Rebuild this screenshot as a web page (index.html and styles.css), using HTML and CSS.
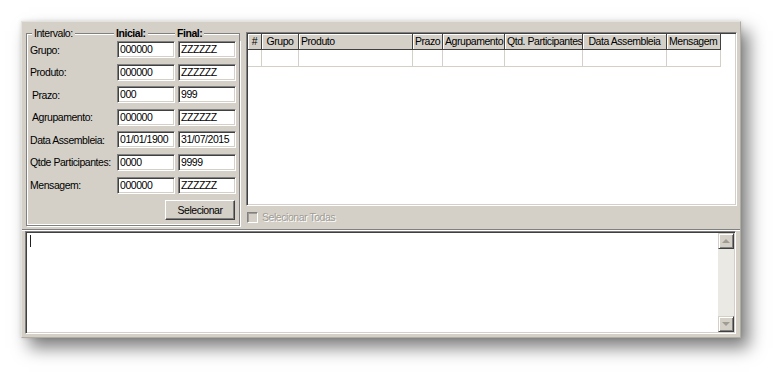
FILE: index.html
```html
<!DOCTYPE html>
<html lang="pt">
<head>
<meta charset="utf-8">
<title>Intervalo</title>
<link rel="stylesheet" href="styles.css">
</head>
<body>
<div class="window">
  <div class="top">
    <div class="groupbox">
      <div class="gb-head">
        <div class="gb-cell">
          <span class="corner-l"></span>
          <span class="gb-text">Intervalo:</span>
          <span class="gb-line"></span>
        </div>
        <div class="gb-cell">
          <span class="gb-text bold">Inicial:</span>
          <span class="gb-line"></span>
        </div>
        <div class="gb-cell">
          <span class="gb-text bold">Final:</span>
          <span class="gb-line corner-r"></span>
        </div>
      </div>
      <div class="gb-body">
        <div class="rows">
          <span class="lbl">Grupo:</span><span class="edit">000000</span><span class="edit">ZZZZZZ</span>
          <span class="lbl">Produto:</span><span class="edit">000000</span><span class="edit">ZZZZZZ</span>
          <span class="lbl indent">Prazo:</span><span class="edit">000</span><span class="edit">999</span>
          <span class="lbl indent">Agrupamento:</span><span class="edit">000000</span><span class="edit">ZZZZZZ</span>
          <span class="lbl">Data Assembleia:</span><span class="edit">01/01/1900</span><span class="edit">31/07/2015</span>
          <span class="lbl">Qtde Participantes:</span><span class="edit">0000</span><span class="edit">9999</span>
          <span class="lbl">Mensagem:</span><span class="edit">000000</span><span class="edit">ZZZZZZ</span>
        </div>
        <div class="btn-row"><span class="button">Selecionar</span></div>
      </div>
    </div>
    <div class="right">
      <div class="grid">
        <div class="grid-row head">
          <span class="hc center">#</span>
          <span class="hc center">Grupo</span>
          <span class="hc">Produto</span>
          <span class="hc">Prazo</span>
          <span class="hc">Agrupamento</span>
          <span class="hc">Qtd. Participantes</span>
          <span class="hc center">Data Assembleia</span>
          <span class="hc">Mensagem</span>
        </div>
        <div class="grid-row data">
          <span class="dc"></span><span class="dc"></span><span class="dc"></span><span class="dc"></span>
          <span class="dc"></span><span class="dc"></span><span class="dc"></span><span class="dc"></span>
        </div>
      </div>
      <div class="check-row">
        <span class="checkbox"></span>
        <span class="check-text">Selecionar Todas</span>
      </div>
    </div>
  </div>
  <div class="sep"></div>
  <div class="memo">
    <div class="memo-text"><span class="caret"></span></div>
    <div class="vscroll">
      <span class="sbtn"><span class="arrow-up"></span></span>
      <span class="track"></span>
      <span class="sbtn"><span class="arrow-down"></span></span>
    </div>
  </div>
</div>
</body>
</html>
```
FILE: styles.css
```css
html, body {
  margin: 0;
  padding: 0;
  background: #ffffff;
}

body {
  font-family: "Liberation Sans", Arial, sans-serif;
  font-size: 10.5px;
  letter-spacing: -0.45px;
  color: #000;
  padding: 21px 0 0 21px;
  height: 381px;
  box-sizing: border-box;
}

.window {
  width: 720px;
  height: 317px;
  box-sizing: border-box;
  background: #d4d0c8;
  border-left: 1px solid #e4e2dc;
  border-top: 1px solid #e4e2dc;
  border-right: 1px solid #b0aca4;
  border-bottom: 1px solid #b0aca4;
  box-shadow: 8px 10px 16px rgba(0, 0, 0, 0.5), 0 0 4px rgba(0, 0, 0, 0.12);
  display: flex;
  flex-direction: column;
}

.top {
  height: 207px;
  box-sizing: border-box;
  padding: 4px 0 0 4px;
  display: flex;
  gap: 6px;
}

/* ---------- group box ---------- */
.groupbox {
  width: 214px;
  height: 200px;
  display: flex;
  flex-direction: column;
}

.gb-head {
  height: 14px;
  display: grid;
  grid-template-columns: 88px 61px 65px;
}

.gb-cell {
  display: flex;
  align-items: stretch;
}

.gb-text {
  padding: 0 2px;
  line-height: 14px;
  white-space: nowrap;
}

.bold {
  font-weight: bold;
}

.gb-line {
  flex: 1;
  align-self: flex-end;
  height: 6px;
  border-top: 1px solid #808080;
  box-shadow: inset 0 1px 0 #ffffff;
}

.corner-l {
  width: 5px;
  align-self: flex-end;
  height: 6px;
  border-top: 1px solid #808080;
  border-left: 1px solid #808080;
  box-shadow: inset 1px 1px 0 #ffffff;
}

.corner-r {
  border-right: 1px solid #808080;
}

.gb-body {
  flex: 1;
  border: 1px solid #808080;
  border-top: none;
  box-shadow: inset 1px -1px 0 #ffffff, 1px 1px 0 #ffffff;
  padding: 1px 4px 0 3px;
  display: flex;
  flex-direction: column;
}

.rows {
  display: grid;
  grid-template-columns: 84px 58px 58px;
  column-gap: 3px;
  grid-auto-rows: 17px;
  row-gap: 5.6px;
  align-items: center;
}

.lbl {
  white-space: nowrap;
}

.indent {
  padding-left: 2px;
}

.edit {
  height: 17px;
  box-sizing: border-box;
  background: #ffffff;
  border-top: 1px solid #808080;
  border-left: 1px solid #808080;
  border-right: 1px solid #ffffff;
  border-bottom: 1px solid #ffffff;
  box-shadow: inset 1px 1px 0 #404040, inset -1px -1px 0 #d4d0c8;
  padding: 0 1px 0 2px;
  line-height: 15px;
  white-space: nowrap;
  overflow: hidden;
}

.btn-row {
  display: flex;
  justify-content: flex-end;
  margin-top: 6px;
}

.button {
  width: 70px;
  height: 20px;
  box-sizing: border-box;
  border-top: 1px solid #ffffff;
  border-left: 1px solid #ffffff;
  border-right: 1px solid #404040;
  border-bottom: 1px solid #404040;
  box-shadow: inset -1px -1px 0 #808080;
  display: flex;
  align-items: center;
  justify-content: center;
}

/* ---------- grid ---------- */
.right {
  margin-top: 6px;
  display: flex;
  flex-direction: column;
}

.grid {
  width: 491px;
  height: 174px;
  box-sizing: border-box;
  background: #ffffff;
  border-top: 1px solid #808080;
  border-left: 1px solid #808080;
  border-right: 1px solid #ffffff;
  border-bottom: 1px solid #ffffff;
  box-shadow: inset 1px 1px 0 #404040, inset -1px -1px 0 #d4d0c8;
  padding: 1px;
}

.grid-row {
  display: grid;
  grid-template-columns: 14px 37px 114px 30px 62px 78px 84px 54px;
  width: 473px;
}

.hc {
  height: 16px;
  box-sizing: border-box;
  background: #d4d0c8;
  border-right: 1px solid #404040;
  border-bottom: 1px solid #404040;
  box-shadow: inset 1px 1px 0 #ffffff;
  padding-left: 2px;
  line-height: 15px;
  white-space: nowrap;
  overflow: hidden;
}

.hc.center {
  text-align: center;
  padding-left: 0;
}

.dc {
  height: 17px;
  box-sizing: border-box;
  border-right: 1px solid #d4d0c8;
  border-bottom: 1px solid #d4d0c8;
}

.check-row {
  margin-top: 5px;
  display: flex;
  align-items: center;
  gap: 4px;
  padding-left: 1px;
  height: 12px;
}

.checkbox {
  width: 11px;
  height: 11px;
  box-sizing: border-box;
  background: #d4d0c8;
  border-top: 1px solid #808080;
  border-left: 1px solid #808080;
  border-right: 1px solid #ffffff;
  border-bottom: 1px solid #ffffff;
  box-shadow: inset 1px 1px 0 #a09c94;
}

.check-text {
  color: #a09c94;
  text-shadow: 1px 1px 0 #ffffff;
}

/* ---------- separator + memo ---------- */
.sep {
  height: 1px;
  background: #808080;
  border-bottom: 1px solid #ffffff;
}

.memo {
  margin: 0 4px 0 3px;
  height: 103px;
  box-sizing: border-box;
  background: #ffffff;
  border-top: 1px solid #808080;
  border-left: 1px solid #808080;
  border-right: 1px solid #ffffff;
  border-bottom: 1px solid #ffffff;
  box-shadow: inset 1px 1px 0 #404040, inset -1px -1px 0 #d4d0c8;
  padding: 1px;
  display: flex;
}

.memo-text {
  flex: 1;
  padding: 2px 0 0 3px;
}

.caret {
  display: block;
  width: 1px;
  height: 12px;
  background: #202020;
}

.vscroll {
  width: 16px;
  display: flex;
  flex-direction: column;
  background: #ebe9e4;
}

.track {
  flex: 1;
}

.sbtn {
  width: 16px;
  height: 16px;
  box-sizing: border-box;
  background: #d4d0c8;
  border-top: 1px solid #d4d0c8;
  border-left: 1px solid #d4d0c8;
  border-right: 1px solid #404040;
  border-bottom: 1px solid #404040;
  box-shadow: inset 1px 1px 0 #ffffff, inset -1px -1px 0 #808080;
  display: flex;
  align-items: center;
  justify-content: center;
}

.arrow-up {
  width: 0;
  height: 0;
  border-left: 4px solid transparent;
  border-right: 4px solid transparent;
  border-bottom: 4px solid #a09c94;
}

.arrow-down {
  width: 0;
  height: 0;
  border-left: 4px solid transparent;
  border-right: 4px solid transparent;
  border-top: 4px solid #a09c94;
}
```
